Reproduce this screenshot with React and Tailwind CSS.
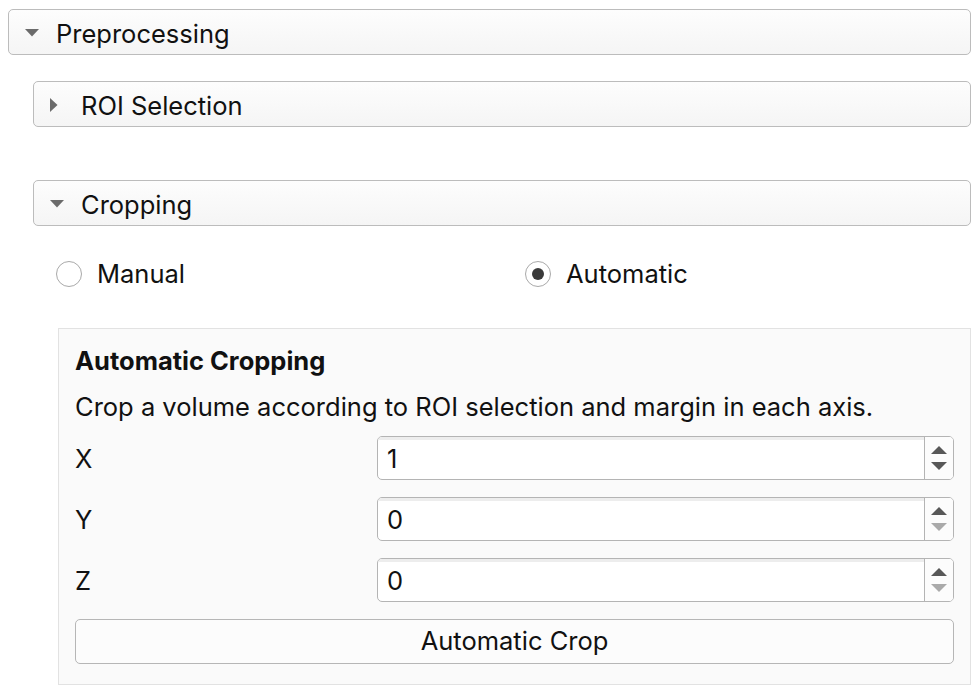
import React, { useState } from 'react';

const font = { fontFamily: 'Inter, "Liberation Sans", sans-serif' };

const Triangle = ({ open }) =>
    open ? (
        <svg width="14" height="8" viewBox="0 0 14 8" className="shrink-0 mt-[2px]">
            <path d="M0 0 H14 L7 7.5 Z" fill="#6b6b6b" />
        </svg>
    ) : (
        <svg width="8" height="14" viewBox="0 0 8 14" className="shrink-0 mt-[2px]">
            <path d="M0 0 V14 L7.5 7 Z" fill="#6b6b6b" />
        </svg>
    );

const SectionHeader = ({ title, open, onClick }) => (
    <button
        type="button"
        onClick={onClick}
        className="w-full h-[46px] flex items-center rounded-[5px] border border-[#bcbcbc] bg-gradient-to-b from-[#fdfdfd] to-[#f5f5f5] text-left"
    >
        <span className="w-[47px] pl-[16px] flex items-center">
            <Triangle open={open} />
        </span>
        <span className="text-[25.5px] leading-[30px] text-[#111] pt-[3px]">{title}</span>
    </button>
);

const Radio = ({ label, checked, onClick }) => (
    <button type="button" onClick={onClick} className="h-[26px] flex items-center gap-[15px] pl-[23px]">
        <span className="w-[26px] h-[26px] rounded-full border-[1.5px] border-[#a9a9a9] bg-white flex items-center justify-center">
            {checked && <span className="w-[12px] h-[12px] rounded-full bg-[#3a3a3a]" />}
        </span>
        <span className="text-[25.5px] leading-[26px] text-[#111]">{label}</span>
    </button>
);

const SpinBox = ({ value, atMin }) => (
    <div className="flex-1 h-[44px] flex rounded-[5px] border-[1.5px] border-[#b4b4b4] bg-white overflow-hidden">
        <div className="flex-1 flex items-center pl-[9px] text-[25.5px] text-[#111] border-t-[3px] border-[#ededed]">
            {value}
        </div>
        <div className="w-[29px] border-l-[1.5px] border-[#b4b4b4] flex flex-col items-center justify-center gap-[8px] bg-[#fcfcfc]">
            <svg width="16" height="8" viewBox="0 0 16 8">
                <path d="M0 8 L8 0 L16 8 Z" fill="#585858" />
            </svg>
            <svg width="16" height="8" viewBox="0 0 16 8">
                <path d="M0 0 H16 L8 8 Z" fill={atMin ? '#aaaaaa' : '#585858'} />
            </svg>
        </div>
    </div>
);

const App = () => {
    const [mode, setMode] = useState('auto');
    const rows = [
        { label: 'X', value: '1', atMin: false },
        { label: 'Y', value: '0', atMin: true },
        { label: 'Z', value: '0', atMin: true },
    ];

    return (
        <div className="w-[980px] h-[694px] bg-white overflow-hidden pt-[9px] pl-[8px] pr-[9px]" style={font}>
            <SectionHeader title="Preprocessing" open />
            <div className="pl-[25px]">
                <div className="mt-[26px]">
                    <SectionHeader title="ROI Selection" open={false} />
                </div>
                <div className="mt-[53px]">
                    <SectionHeader title="Cropping" open />
                </div>
                <div className="grid grid-cols-2 mt-[35px] h-[26px]">
                    <Radio label="Manual" checked={mode === 'manual'} onClick={() => setMode('manual')} />
                    <Radio label="Automatic" checked={mode === 'auto'} onClick={() => setMode('auto')} />
                </div>
                <div className="ml-[25px] mt-[41px] border border-[#e2e2e2] bg-[#fafafa] px-[16px] pt-[17px] pb-[20px] flex flex-col">
                    <div className="text-[25.5px] leading-[30px] font-bold text-[#111]">Automatic Cropping</div>
                    <div className="text-[25.5px] leading-[30px] text-[#111] mt-[16px]">
                        Crop a volume according to ROI selection and margin in each axis.
                    </div>
                    <div className="flex flex-col gap-[17px] mt-[14px]">
                        {rows.map((r) => (
                            <div key={r.label} className="flex items-center">
                                <span className="w-[302px] text-[25.5px] text-[#111] pt-[2px]">{r.label}</span>
                                <SpinBox value={r.value} atMin={r.atMin} />
                            </div>
                        ))}
                        <button
                            type="button"
                            className="h-[45px] rounded-[5px] border-[1.5px] border-[#b6b6b6] bg-[#fcfcfc] text-[25.5px] text-[#111]"
                        >
                            Automatic Crop
                        </button>
                    </div>
                </div>
            </div>
        </div>
    );
};

export default App;
